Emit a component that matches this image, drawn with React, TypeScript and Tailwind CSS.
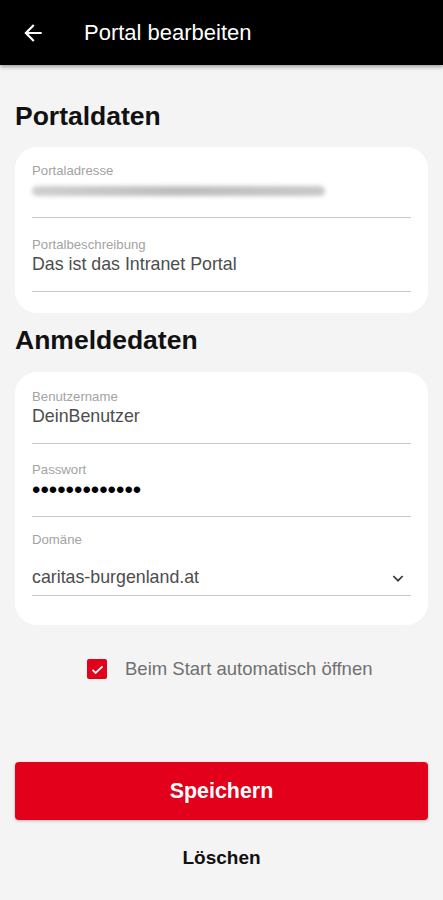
import React from "react";

const font = { fontFamily: '"Liberation Sans", Arial, sans-serif' };

function Field({
  label,
  children,
  gap = "",
}: {
  label: string;
  children: React.ReactNode;
  gap?: string;
}) {
  return (
    <div className={`border-b border-[#c9c9c9] pb-[15px] ${gap}`}>
      <div className="text-[13.2px] leading-[16px] text-[#a3a3a3]">{label}</div>
      {children}
    </div>
  );
}

export default function App() {
  return (
    <div className="min-h-[900px] bg-[#f4f4f4]" style={font}>
      <header className="flex h-[65px] items-center bg-black pl-[20px] shadow-[0_2px_4px_rgba(0,0,0,0.35)]">
        <svg width="26" height="26" viewBox="0 0 24 24" fill="#fff">
          <path d="M20 11H7.83l5.59-5.59L12 4l-8 8 8 8 1.41-1.41L7.83 13H20v-2z" />
        </svg>
        <h1 className="ml-[38px] text-[22px] text-white">Portal bearbeiten</h1>
      </header>

      <main className="px-[15px]">
        <h2 className="mt-[36px] text-[26.5px] font-bold leading-[30px] text-[#111]">Portaldaten</h2>
        <section className="mt-[16px] rounded-[22px] bg-white px-[17px] pt-[16px] pb-[21px]">
          <Field label="Portaladresse">
            <div className="flex h-[23px] items-center">
              <div className="h-[10px] w-[293px] rounded-full bg-gradient-to-r from-[#cfcfcf] via-[#bdbdbd] to-[#c8c8c8] blur-[2px]" />
            </div>
          </Field>
          <Field label="Portalbeschreibung" gap="mt-[19px]">
            <div className="text-[17.8px] leading-[23px] text-[#4d4d4d]">Das ist das Intranet Portal</div>
          </Field>
        </section>

        <h2 className="mt-[12px] text-[26.5px] font-bold leading-[30px] text-[#111]">Anmeldedaten</h2>
        <section className="mt-[17px] rounded-[22px] bg-white px-[17px] pt-[17px] pb-[29px]">
          <Field label="Benutzername">
            <div className="text-[17.8px] leading-[23px] text-[#4d4d4d]">DeinBenutzer</div>
          </Field>
          <Field label="Passwort" gap="mt-[18px]">
            <div className="text-[24px] leading-[23px] text-black">•••••••••••••</div>
          </Field>
          <div className="mt-[15px] border-b border-[#c9c9c9] pb-[6px]">
            <div className="text-[13.2px] leading-[16px] text-[#a3a3a3]">Domäne</div>
            <div className="mt-[18px] flex h-[23px] items-center justify-between">
              <span className="text-[17.8px] leading-[23px] text-[#4d4d4d]">caritas-burgenland.at</span>
              <svg width="16" height="16" viewBox="0 0 24 24" fill="none" stroke="#3a3a3a" strokeWidth="2.6" className="mr-[5px]">
                <path d="M5 9l7 7 7-7" />
              </svg>
            </div>
          </div>
        </section>

        <label className="mt-[34px] flex items-center pl-[72px]">
          <span className="flex h-[20px] w-[20px] items-center justify-center rounded-[2px] bg-[#e2001a]">
            <svg width="15" height="15" viewBox="0 0 24 24" fill="none" stroke="#fff" strokeWidth="2.8">
              <path d="M4 12.5l5 5L20 7" />
            </svg>
          </span>
          <span className="ml-[18px] text-[18.5px] leading-[20px] text-[#707070]">Beim Start automatisch öffnen</span>
        </label>

        <button className="mt-[83px] flex h-[58px] w-full items-center justify-center rounded-[4px] bg-[#e2001a] text-[21.4px] font-bold text-white shadow-[0_1px_3px_rgba(0,0,0,0.25)]">
          Speichern
        </button>
        <div className="mt-[26px] text-center text-[19px] font-bold leading-[24px] text-[#111]">Löschen</div>
      </main>
    </div>
  );
}
